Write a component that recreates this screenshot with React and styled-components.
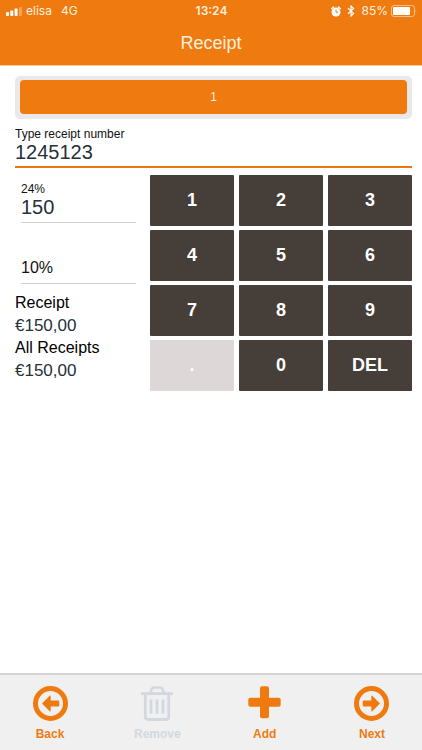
import {useState} from "react";
import styled, {createGlobalStyle} from "styled-components";

const GlobalStyle = createGlobalStyle`
  *, *::before, *::after {
    box-sizing: border-box;
  }
  body {
    margin: 0;
    background: #fff;
    color: #111;
    font-family: "Liberation Sans", Arial, sans-serif;
  }
  button, input {
    font-family: inherit;
    margin: 0;
    padding: 0;
    border: 0;
    background: none;
  }
`;

const Page = styled.div`
  min-height: 100vh;
  display: flex;
  flex-direction: column;
`;

const Header = styled.header`
  background: #ef7b10;
  border-bottom: 1px solid #fdc88f;
`;

const StatusBar = styled.div`
  display: grid;
  grid-template-columns: 1fr auto 1fr;
  align-items: center;
  height: 22px;
  padding: 0 5px 0 6px;
  color: #fff0df;
  font: 12px/22px Inter, sans-serif;
`;

const StatusGroup = styled.div`
  display: flex;
  align-items: center;
  gap: ${props => props.$gap}px;
  justify-content: ${props => props.$end ? "flex-end" : "flex-start"};
`;

const Clock = styled.time`
  font-weight: 600;
`;

const Carrier = styled.span`
  margin-right: 6px;
`;

const Title = styled.h1`
  margin: 0;
  color: #fff0df;
  font-size: 18px;
  font-weight: 400;
  line-height: 43px;
  text-align: center;
`;

const Main = styled.main`
  flex-grow: 1;
  padding: 10px 10px 0 15px;
`;

const Tabs = styled.div`
  display: flex;
  padding: 4px 5px 5px;
  border-radius: 5px;
  background: #e9e9e9;
`;

const Tab = styled.button`
  flex: 1;
  height: 34px;
  border-radius: 4px;
  background: #ef7b10;
  color: #fff0df;
  font-size: 12px;
`;

const Label = styled.label`
  display: block;
  font-size: 12px;
  line-height: 14px;
  color: #111;
`;

const ReceiptField = styled.div`
  margin-top: 8px;
`;

const ReceiptInput = styled.input`
  display: block;
  width: 100%;
  height: 27px;
  padding-bottom: 3px;
  border-bottom: 2px solid #e8780f;
  color: #263039;
  font-size: 20px;
  outline: none;
`;

const Entry = styled.div`
  display: grid;
  grid-template-columns: 34% 66%;
  margin-top: 7px;
`;

const TaxFields = styled.div`
  display: flex;
  flex-direction: column;
  gap: 34px;
  padding: 7px 14px 0 6px;
`;

const TaxInput = styled.input`
  display: block;
  width: 100%;
  height: 27px;
  padding-bottom: 4px;
  border-bottom: 1px solid #d0d0d0;
  color: #263039;
  font-size: ${props => props.$empty ? "16px" : "20px"};
  outline: none;
  &::placeholder {
    color: #111;
    opacity: 1;
  }
`;

const Totals = styled.dl`
  margin: 8px 0 0;
`;

const TotalName = styled.dt`
  color: #000;
  font-size: 16px;
  line-height: 22px;
`;

const TotalValue = styled.dd`
  margin: 0;
  color: #263039;
  font-size: 17px;
  line-height: 23px;
`;

const Keypad = styled.div`
  display: grid;
  grid-template-columns: repeat(3, 1fr);
  grid-auto-rows: 51px;
  align-content: start;
  gap: 4px 5px;
`;

const Key = styled.button`
  border-radius: 1px;
  background: #463e39;
  color: #fff;
  font-size: 18px;
  font-weight: 700;
  &:disabled {
    background: #ddd7d7;
  }
`;

const Footer = styled.footer`
  display: flex;
  justify-content: space-between;
  height: 77px;
  padding: 11px 20px 0;
  border-top: 2px solid #d3d3d3;
  background: #f0f0f0;
`;

const Action = styled.button`
  display: flex;
  flex-direction: column;
  align-items: center;
  justify-content: flex-start;
  gap: 6px;
  width: 60px;
  color: #ef7b10;
  font-size: 12px;
  font-weight: 700;
  line-height: 14px;
  &:disabled {
    color: #d1d9de;
  }
`;

function Signal() {
    return (
        <svg width="17" height="9" viewBox="0 0 17 9" fill="#fff" aria-hidden="true">
            <rect x="0" y="5" width="3" height="4" rx="0.8"/>
            <rect x="4.3" y="3.5" width="3" height="5.5" rx="0.8"/>
            <rect x="8.6" y="1.5" width="3" height="7.5" rx="0.8"/>
            <rect x="13" y="0" width="3" height="9" rx="0.8" opacity="0.3"/>
        </svg>
    );
}

function Alarm() {
    return (
        <svg width="10" height="11" viewBox="0 0 10 11" aria-hidden="true">
            <path d="M0.7 2.6 2.6 0.9M9.3 2.6 7.4 0.9" stroke="#fff" strokeWidth="1.4" strokeLinecap="round"/>
            <circle cx="5" cy="6" r="4.5" fill="#fff"/>
            <path d="M5 3.6V6.2H7" fill="none" stroke="#ef7b10" strokeWidth="1"/>
        </svg>
    );
}

function Bluetooth() {
    return (
        <svg width="8" height="12" viewBox="0 0 8 12" aria-hidden="true">
            <path d="M1 3.3 6.6 8.4 4 11V1L6.6 3.6 1 8.7" fill="none" stroke="#fff" strokeWidth="1.2"/>
        </svg>
    );
}

function Battery() {
    return (
        <svg width="26" height="12" viewBox="0 0 26 12" aria-hidden="true">
            <rect x="0.5" y="0.5" width="23" height="11" rx="2.5" fill="none" stroke="#fff" opacity="0.5"/>
            <rect x="2" y="2" width="17" height="8" rx="1" fill="#fff"/>
            <path d="M24.7 4.2q1.3 1.8 0 3.6z" fill="#fff" opacity="0.5"/>
        </svg>
    );
}

function CircleArrow({right}) {
    return (
        <svg width="35" height="35" viewBox="0 0 35 35" aria-hidden="true">
            <circle cx="17.5" cy="17.5" r="15" fill="none" stroke="currentColor" strokeWidth="5"/>
            <path
                d="M9 17.5 16.7 9.8q1-.6 1 .5v4.3h7.6q1 0 1 1v3.8q0 1-1 1h-7.6v4.3q0 1.1-1 .5z"
                fill="currentColor"
                transform={right ? "translate(35 0) scale(-1 1)" : undefined}
            />
        </svg>
    );
}

function Trash() {
    return (
        <svg width="32" height="35" viewBox="0 0 32 35" fill="none" stroke="currentColor" aria-hidden="true">
            <path d="M0 7.6H32" strokeWidth="2.8"/>
            <path d="M9.2 7 11 2.6q.5-1.1 1.8-1.1h6.6q1.3 0 1.8 1.1L23 7" strokeWidth="2.6"/>
            <path d="M4.3 8v22.5q0 3 2.6 3h18.2q2.6 0 2.6-3V8" strokeWidth="2.8"/>
            <path d="M10 13.5v14.2M16 13.5v14.2M22 13.5v14.2" strokeWidth="2.8"/>
        </svg>
    );
}

function Plus() {
    return (
        <svg width="33" height="35" viewBox="0 0 33 35" fill="currentColor" aria-hidden="true">
            <rect x="0.3" y="11.8" width="32.4" height="9" rx="2"/>
            <rect x="12" y="0.2" width="9" height="32" rx="2"/>
        </svg>
    );
}

const keys = ["1", "2", "3", "4", "5", "6", "7", "8", "9", ".", "0", "DEL"];

export default function App() {
    const [receiptNumber,setReceiptNumber] = useState("1245123");
    const [high,setHigh] = useState("150");
    const [low,setLow] = useState("");

    function pressKey(key) {
        setHigh(prev => key === "DEL" ? prev.slice(0, -1) : prev + key);
    }

    const total = "€" + (Number(high) + Number(low)).toFixed(2).replace(".", ",");

    return (
        <>
            <GlobalStyle />
            <Page>
                <Header>
                    <StatusBar>
                        <StatusGroup $gap={3}>
                            <Signal />
                            <Carrier>elisa</Carrier>
                            <span>4G</span>
                        </StatusGroup>
                        <Clock>13:24</Clock>
                        <StatusGroup $gap={6} $end>
                            <Alarm />
                            <Bluetooth />
                            <StatusGroup $gap={3}>
                                <span>85%</span>
                                <Battery />
                            </StatusGroup>
                        </StatusGroup>
                    </StatusBar>
                    <Title>Receipt</Title>
                </Header>
                <Main>
                    <Tabs>
                        <Tab type="button">1</Tab>
                    </Tabs>
                    <ReceiptField>
                        <Label htmlFor="receipt-number">Type receipt number</Label>
                        <ReceiptInput
                            id="receipt-number"
                            value={receiptNumber}
                            onChange={ev => setReceiptNumber(ev.target.value)}
                        />
                    </ReceiptField>
                    <Entry>
                        <div>
                            <TaxFields>
                                <div>
                                    <Label htmlFor="tax-high">24%</Label>
                                    <TaxInput id="tax-high" value={high} onChange={ev => setHigh(ev.target.value)}/>
                                </div>
                                <TaxInput
                                    aria-label="10%"
                                    placeholder="10%"
                                    $empty={!low}
                                    value={low}
                                    onChange={ev => setLow(ev.target.value)}
                                />
                            </TaxFields>
                            <Totals>
                                <TotalName>Receipt</TotalName>
                                <TotalValue>{total}</TotalValue>
                                <TotalName>All Receipts</TotalName>
                                <TotalValue>{total}</TotalValue>
                            </Totals>
                        </div>
                        <Keypad>
                            {keys.map(key => (
                                <Key key={key} type="button" disabled={key === "."} onClick={() => pressKey(key)}>
                                    {key}
                                </Key>
                            ))}
                        </Keypad>
                    </Entry>
                </Main>
                <Footer>
                    <Action type="button"><CircleArrow />Back</Action>
                    <Action type="button" disabled><Trash />Remove</Action>
                    <Action type="button"><Plus />Add</Action>
                    <Action type="button"><CircleArrow right />Next</Action>
                </Footer>
            </Page>
        </>
    );
}
